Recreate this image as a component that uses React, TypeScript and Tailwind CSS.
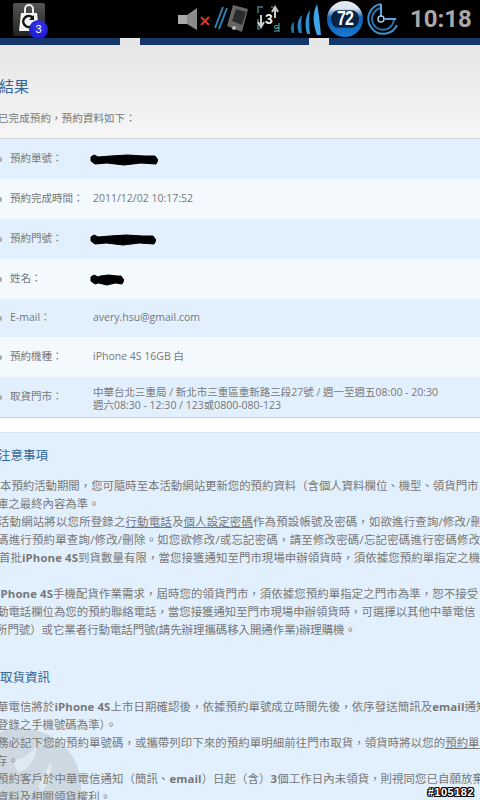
const FONT = "font-['Open_Sans','Noto_Sans_CJK_TC',sans-serif]";

const rows = [
  { label: "預約單號：", h: "h-[40px]", bg: "bg-[#e2f0fd]", blob: 68 },
  { label: "預約完成時間：", h: "h-[40px]", bg: "bg-[#f4f9fe]", value: "2011/12/02 10:17:52" },
  { label: "預約門號：", h: "h-[40px]", bg: "bg-[#e2f0fd]", blob: 66 },
  { label: "姓名：", h: "h-[40px]", bg: "bg-[#f4f9fe]", blob: 34 },
  { label: "E-mail：", h: "h-[38px]", bg: "bg-[#e2f0fd]", value: "avery.hsu@gmail.com" },
  { label: "預約機種：", h: "h-[40px]", bg: "bg-[#f4f9fe]", value: "iPhone 4S 16GB 白" },
];

const Blob = ({ w }: { w: number }) => (
  <svg width={w} height="13" viewBox={`0 0 ${w} 13`} className="block">
    <path
      d={`M1 4 L4 2 L8 4 L${w * 0.3} 3 L${w * 0.55} 2 L${w * 0.8} 3 L${w - 3} 3 L${w} 7 L${w - 2} 11 L${w * 0.75} 10 L${w * 0.5} 12 L${w * 0.25} 10 L5 11 L1 8 Z`}
      fill="#000"
      stroke="#000"
      strokeWidth="1"
    />
  </svg>
);

const BagIcon = () => (
  <div className="relative w-[32px] h-[33px] rounded-[2px] bg-gradient-to-b from-[#555] to-[#222] flex items-center justify-center">
    <svg width="26" height="30" viewBox="0 0 26 30">
      <path d="M9 9 V5 a4 4 0 0 1 8 0 V9" fill="none" stroke="#eee" strokeWidth="2" />
      <path d="M5 9 H21 L23 27 H3 Z" fill="#f4f4f4" />
      <path d="M17 14 a5.5 5.5 0 1 0 -1 8" fill="none" stroke="#111" strokeWidth="2.5" />
      <path d="M18 11 v5 h-5 z" fill="#111" />
    </svg>
    <div className="absolute left-[16px] top-[17px] w-[19px] h-[19px] rounded-full bg-[radial-gradient(circle_at_50%_35%,#3a3af0,#1010c0)] text-white text-[11px] flex items-center justify-center font-['Liberation_Sans',sans-serif]">
      3
    </div>
  </div>
);

const SpeakerIcon = () => (
  <svg width="32" height="24" viewBox="0 0 32 24">
    <rect x="0" y="8" width="9" height="9" fill="#aaa" />
    <path d="M9 8 L19 1 V23 L9 17 Z" fill="#8a8a8a" />
    <path d="M23 10 L31 18 M31 10 L23 18" stroke="#d9361f" strokeWidth="2" />
  </svg>
);

const PhoneIcon = () => (
  <svg width="34" height="30" viewBox="0 0 34 30">
    <path d="M1 24 L9 3 M5 25 L13 4" stroke="#2f7fb5" strokeWidth="2" />
    <path d="M13 22 L19 1 L34 5 L28 28 Z" fill="#666" />
    <path d="M18 17 L22 5 L32 8 L28 21 Z" fill="#2b2b2b" />
    <circle cx="20" cy="24" r="2" fill="#bbb" />
  </svg>
);

const NetIcon = () => (
  <svg width="24" height="28" viewBox="0 0 24 28">
    <path d="M6 2 H1 V8 M1 14 V24 H3 M17 26 H22 V18 M16 2 H14" fill="none" stroke="#3c7f8c" strokeWidth="1.5" />
    <path d="M18 13 V3 M15 7 L18 2 L21 7" fill="none" stroke="#ccc" strokeWidth="2" />
    <path d="M4 10 V21 M1 17 L4 22 L7 17" fill="none" stroke="#ccc" strokeWidth="2" />
    <text x="8" y="19" fill="#eee" fontSize="14" fontWeight="700" fontFamily="Liberation Sans">3</text>
    <text x="17" y="24" fill="#9fd" fontSize="6" fontFamily="Liberation Sans">G</text>
  </svg>
);

const WavesIcon = () => (
  <svg width="32" height="32" viewBox="0 0 32 32">
    <path d="M2 30 C0 25 1 21 4 19 C4 23 4 26 4 30 Z" fill="#1d6fb0" />
    <path d="M9 30 C6 22 8 16 12 12 C11 18 11 24 12 30 Z" fill="#2581c4" />
    <path d="M17 31 C14 20 16 12 20 7 C19 15 19 23 20 31 Z" fill="#2f93d6" />
    <path d="M27 32 C22 18 23 9 27 1 C29 10 30 22 31 32 Z" fill="#3ba6ea" />
  </svg>
);

const BatteryOrb = () => (
  <div className="relative w-[36px] h-[36px] rounded-full bg-gradient-to-b from-[#dfe8ef] from-[20%] via-[#0f5fb5] via-[45%] to-[#1a78d0] flex items-center justify-center">
    <div className="w-[28px] h-[14px] bg-[#0a2342] rounded-[7px] flex items-center justify-center text-white text-[16px] font-bold font-['Liberation_Sans',sans-serif] tracking-[-1px] scale-y-125">
      72
    </div>
  </div>
);

const ClockIcon = () => (
  <svg width="32" height="32" viewBox="0 0 32 32">
    <path d="M14 1 A15 15 0 1 0 30 22" fill="none" stroke="#3d8fd0" strokeWidth="2" />
    <path d="M14 5 A11 11 0 1 0 27 16" fill="none" stroke="#2a6ea8" strokeWidth="2" />
    <path d="M14 1 V13 M18 16 H29" stroke="#5aa5e0" strokeWidth="2" />
    <circle cx="14" cy="16" r="3" fill="none" stroke="#9cc8ea" strokeWidth="1.5" />
  </svg>
);

export default function App() {
  return (
    <div lang="zh-TW" className={`relative w-[480px] h-[800px] overflow-hidden bg-[#e2f0fd] ${FONT}`}>
      {/* status bar */}
      <div className="h-[38px] bg-black flex items-center">
        <div className="ml-[13px]"><BagIcon /></div>
        <div className="ml-[133px]"><SpeakerIcon /></div>
        <div className="ml-[4px]"><PhoneIcon /></div>
        <div className="ml-[9px]"><NetIcon /></div>
        <div className="ml-[9px]"><WavesIcon /></div>
        <div className="ml-[5px]"><BatteryOrb /></div>
        <div className="ml-[4px]"><ClockIcon /></div>
        <div className="ml-[11px] text-[24px] font-bold text-[#a9a9a9] leading-none whitespace-nowrap font-['Roboto',sans-serif]">10:18</div>
      </div>

      {/* nav strip */}
      <div className="h-[7px] flex bg-[#e6e6e6]">
        <div className="w-[120px] bg-[#143668]" />
        <div className="w-[20px]" />
        <div className="w-[169px] bg-[#143668]" />
        <div className="w-[20px]" />
        <div className="w-[151px] bg-[#143668]" />
      </div>

      {/* result header */}
      <div className="h-[94px] bg-gradient-to-b from-[#e6e6e6] to-[#f6f6f6] border-b border-[#d2d2d2] pt-[31px]">
        <div className="-ml-[1px] text-[15px] leading-[20px] text-[#336699]">結果</div>
        <div className="-ml-[2px] mt-[14px] text-[10.5px] leading-[16px] text-[#777] tracking-[0.1px] whitespace-nowrap">已完成預約，預約資料如下：</div>
      </div>

      {/* reservation table */}
      {rows.map((r) => (
        <div key={r.label} className={`${r.h} ${r.bg} flex items-center text-[10.5px] text-[#777]`}>
          <span className="w-[2px] h-[5px] bg-[#aaa] rounded-r-full" />
          <span className="ml-[8px] w-[83px] whitespace-nowrap">{r.label}</span>
          {r.blob ? (
            <span className="-ml-[3px]"><Blob w={r.blob} /></span>
          ) : (
            <span className="whitespace-nowrap">{r.value}</span>
          )}
        </div>
      ))}
      <div className="h-[41px] bg-[#e2f0fd] border-b border-[#c9ccd0] flex items-center text-[10.5px] text-[#777]">
        <span className="w-[2px] h-[5px] bg-[#aaa] rounded-r-full" />
        <span className="ml-[8px] w-[83px] whitespace-nowrap">取貨門市：</span>
        <div className="leading-[13px] pt-[3px] whitespace-nowrap">
          <div>中華台北三重局 / 新北市三重區重新路三段27號 / 週一至週五08:00 - 20:30</div>
          <div>週六08:30 - 12:30 / 123或0800-080-123</div>
        </div>
      </div>
      <div className="h-[15px] bg-white border-b border-[#d5e4f0]" />

      {/* faint watermark behind the notes */}
      <svg width="90" height="76" viewBox="0 0 90 76" className="absolute left-0 top-[726px]">
        <path d="M0 6 C30 -4 65 8 78 42 C82 54 82 66 80 76 H0 Z" fill="#cdd8e1" />
        <path d="M12 34 C24 34 32 26 37 18 C36 32 30 44 18 46 Z M38 60 C44 50 47 42 51 36 C53 48 48 58 42 66 Z" fill="#dfe9f1" />
      </svg>

      {/* notes */}
      <div className="relative text-[11.4px] leading-[18px] text-[#777] whitespace-nowrap">
        <h2 className="mt-[13px] -ml-[2px] text-[12.5px] leading-[20px] text-[#336699]">注意事項</h2>
        <div className="mt-[11px]">
          <p>本預約活動期間，您可隨時至本活動網站更新您的預約資料（含個人資料欄位、機型、領貨門市</p>
          <p className="-ml-[3px]">庫之最終內容為準。</p>
          <p className="-ml-[2px] tracking-[0.2px]">活動網站將以您所登錄之<u>行動電話</u>及<u>個人設定密碼</u>作為預設帳號及密碼，如欲進行查詢/修改/刪除</p>
          <p className="-ml-[3px] tracking-[0.25px]">碼進行預約單查詢/修改/刪除。如您欲修改/或忘記密碼，請至修改密碼/忘記密碼進行密碼修改/刪除</p>
          <p className="-ml-[1px] tracking-[0.1px]">首批<b>iPhone 4S</b>到貨數量有限，當您接獲通知至門市現場申辦領貨時，須依據您預約單指定之機種</p>
          <p className="-ml-[2px]">.</p>
          <p className="-ml-[3px] tracking-[0.1px]"><b>iPhone 4S</b>手機配貨作業需求，屆時您的領貨門市，須依據您預約單指定之門市為準，恕不接受</p>
          <p className="-ml-[3px]">動電話欄位為您的預約聯絡電話，當您接獲通知至門市現場申辦領貨時，可選擇以其他中華電信</p>
          <p className="-ml-[4px]">所門號）或它業者行動電話門號(請先辦理攜碼移入開通作業)辦理購機。</p>
        </div>

        <h2 className="mt-[29px] text-[12.5px] leading-[20px] text-[#336699]">取貨資訊</h2>
        <div className="mt-[10px]">
          <p className="-ml-[3px] tracking-[0.1px]">華電信將於<b>iPhone 4S</b>上市日期確認後，依據預約單號成立時間先後，依序發送簡訊及<b>email</b>通知</p>
          <p className="-ml-[3px]">登錄之手機號碼為準）。</p>
          <p className="-ml-[3px] tracking-[0.1px]">務必記下您的預約單號碼，或攜帶列印下來的預約單明細前往門市取貨，領貨時將以您的<u>預約單</u></p>
          <p className="-ml-[4px]">存。</p>
          <p className="-ml-[3px] tracking-[0.1px]">預約客戶於中華電信通知（簡訊、<b>email</b>）日起（含）<b>3</b>個工作日內未領貨，則視同您已自願放棄</p>
          <p className="-ml-[3px]">資料及相關領貨權利。</p>
        </div>
      </div>

      {/* image id stamp */}
      <div className="absolute right-[6px] bottom-[2px] text-[11px] leading-[12px] font-bold text-white font-['Liberation_Sans',sans-serif] [text-shadow:-1px_0_#000,1px_0_#000,0_-1px_#000,0_1px_#000,-1px_-1px_#000,1px_1px_#000,1px_-1px_#000,-1px_1px_#000] tracking-[0.5px]">
        #105182
      </div>
    </div>
  );
}
